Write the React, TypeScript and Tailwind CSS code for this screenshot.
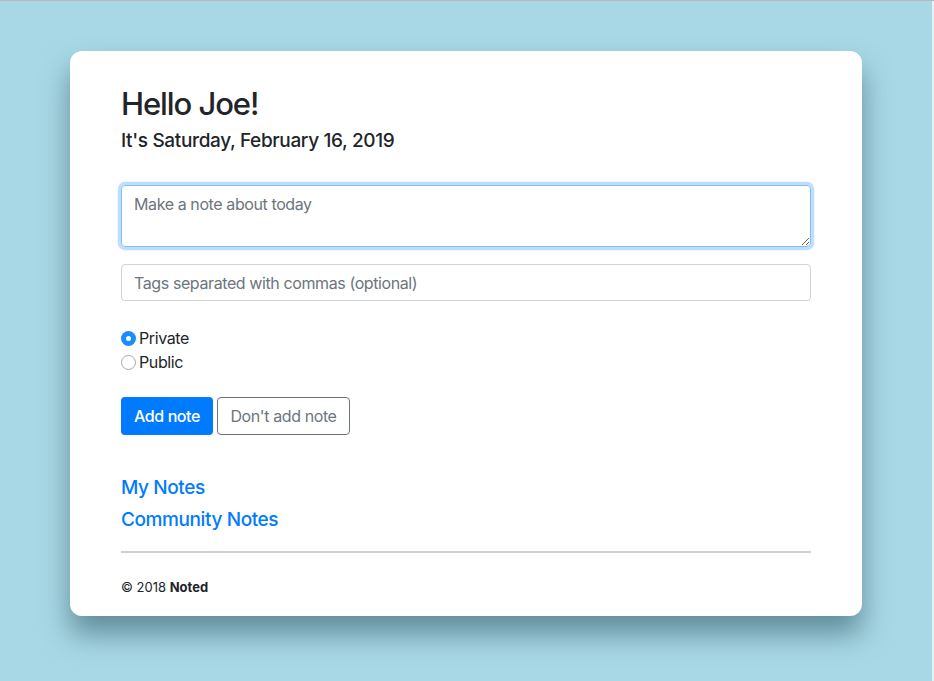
import React from 'react';

const App = () => {
  return (
    <div className="relative h-[681px] w-full overflow-hidden border-t border-[#b9b9b9] bg-[#a8d8e5] font-['Inter','Liberation_Sans',sans-serif] tracking-[-0.025em] text-[#212529]">
      <div className="absolute right-0 top-0 h-full w-[2px] bg-[#e4f1f5]" />
      <div className="ml-[70px] mt-[50px] h-[565px] w-[792px] rounded-[12px] bg-white px-[51px] pt-[34px] shadow-[0_18px_28px_rgba(40,80,95,0.55)]">
        <h2 className="h-[38px] text-[31px] leading-[38px] font-medium tracking-[-0.035em]">Hello Joe!</h2>
        <h5 className="mt-[6px] h-[24px] text-[19px] leading-[24px] font-medium tracking-[-0.018em]">
          It's Saturday, February 16, 2019
        </h5>
        <textarea
          className="mt-[32px] block h-[62px] w-full resize-y rounded-[4px] border border-[#80bdff] px-[12px] py-[6px] text-[16px] leading-[24px] tracking-[-0.025em] shadow-[0_0_0_3.2px_rgba(0,123,255,0.25)] outline-none placeholder:text-[#6c757d]"
          placeholder="Make a note about today"
        />
        <input
          className="mt-[17px] block h-[37px] w-full rounded-[4px] border border-[#ced4da] px-[12px] text-[16px] tracking-[-0.025em] outline-none placeholder:text-[#6c757d]"
          placeholder="Tags separated with commas (optional)"
          type="text"
        />
        <div className="mt-[25px] flex flex-col text-[16px] leading-[24px]">
          <label className="flex items-center gap-[3px]">
            <span className="flex h-[15px] w-[15px] items-center justify-center rounded-full bg-[#1a8cff]">
              <span className="h-[5px] w-[5px] rounded-full bg-white" />
            </span>
            <span>Private</span>
          </label>
          <label className="flex items-center gap-[3px]">
            <span className="h-[15px] w-[15px] rounded-full border border-[#a9a9a9] bg-white" />
            <span>Public</span>
          </label>
        </div>
        <div className="mt-[23px] flex gap-[4px]">
          <button className="h-[38px] w-[92px] rounded-[4px] bg-[#007bff] text-[16px] font-medium tracking-[-0.025em] text-white">
            Add note
          </button>
          <button className="h-[38px] w-[133px] rounded-[4px] border border-[#6c757d] text-[16px] tracking-[-0.025em] text-[#6c757d]">
            Don't add note
          </button>
        </div>
        <div className="mt-[41px] flex flex-col gap-[8px] text-[19px] leading-[24px] font-medium text-[#007bff]">
          <a>My Notes</a>
          <a>Community Notes</a>
        </div>
        <hr className="mt-[19px] border-t-2 border-[#cfcfd1]" />
        <footer className="mt-[24px] text-[13px] leading-[20px] tracking-normal">
          © 2018 <b>Noted</b>
        </footer>
      </div>
    </div>
  );
};

export default App;
